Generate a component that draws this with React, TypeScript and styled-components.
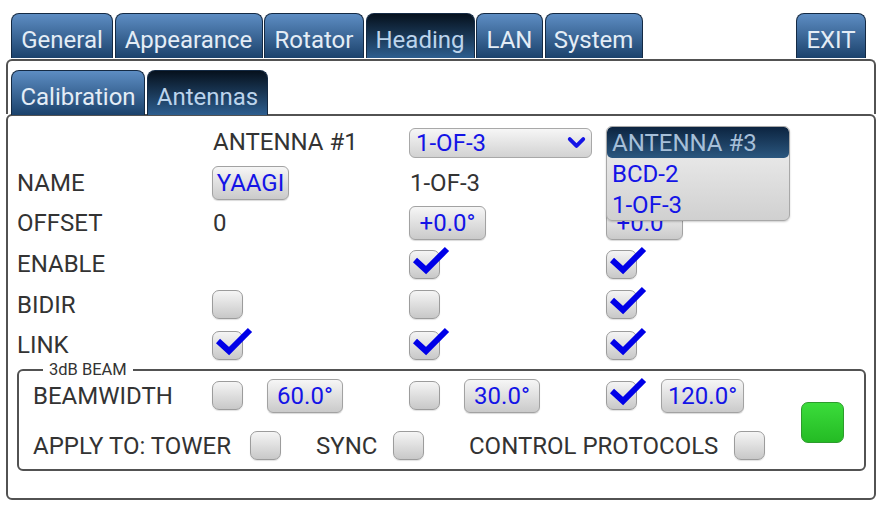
import React from 'react';
import styled, { createGlobalStyle, css } from 'styled-components';
import { ChevronDown } from 'lucide-react';

const Global = createGlobalStyle`
  html, body { margin: 0; padding: 0; background: #fff; }
  body {
    font-family: Roboto, "Noto Sans", "Liberation Sans", sans-serif;
    color: #333;
    width: 881px;
    height: 507px;
    overflow: hidden;
  }
  * { box-sizing: border-box; }
`;

const TabBar = styled.div`
  display: flex;
  gap: 1.5px;
  height: 58px;
  padding: 13px 15px 0 11px;
`;

const Tab = styled.div<{ $active?: boolean; $push?: boolean; $w: number }>`
  width: ${(p) => p.$w}px;
  height: 45px;
  display: flex;
  align-items: center;
  justify-content: center;
  padding-top: 8px;
  font-size: 24px;
  line-height: 1;
  color: #e4edf6;
  border: 1px solid #142a44;
  border-bottom: none;
  border-radius: 8px 8px 0 0;
  background: linear-gradient(#5d8dc3, #1b426c);
  white-space: nowrap;
  ${(p) =>
    p.$active &&
    css`
      background: linear-gradient(#06111d, #2d5e8f);
      color: #bcd4ec;
    `}
  ${(p) =>
    p.$push &&
    css`
      margin-left: auto;
    `}
`;

const Frame = styled.div`
  margin: 1px 0 0 6px;
  width: 870px;
  height: 55px;
  border: 2px solid #525252;
  border-bottom: none;
  border-radius: 6px 6px 0 0;
  padding: 9px 0 0 3px;
  display: flex;
  gap: 2px;
`;

const Panel = styled.div`
  margin-left: 6px;
  width: 870px;
  height: 386px;
  border: 2px solid #525252;
  border-radius: 6px;
  padding-top: 6px;
`;

const Grid = styled.div`
  display: grid;
  grid-template-columns: 195px 197px 197px 1fr;
  grid-auto-rows: 40.6px;
  align-items: center;
  padding-left: 9px;
`;

const Cell = styled.div`
  position: relative;
  display: flex;
  align-items: center;
  height: 100%;
`;

const Label = styled.span`
  font-size: 24px;
  color: #333;
  white-space: nowrap;
`;

const Value = styled(Label)<{ $x?: number }>`
  margin-left: ${(p) => p.$x ?? 1}px;
`;

const Btn = styled.span<{ $w: number }>`
  display: inline-flex;
  align-items: center;
  justify-content: center;
  width: ${(p) => p.$w}px;
  height: 34px;
  border: 1px solid #a2a2a2;
  border-radius: 6px;
  background: linear-gradient(#f6f6f6, #cacaca);
  box-shadow: 0 1px 1px rgba(0, 0, 0, 0.15);
  color: #1414e6;
  font-size: 24px;
  white-space: nowrap;
`;

const Box = styled.span`
  position: relative;
  display: inline-block;
  flex: none;
  width: 31px;
  height: 29px;
  border: 1px solid #9c9c9c;
  border-radius: 7px;
  background: linear-gradient(#f5f5f5, #c8c8c8);
  box-shadow: 0 1px 1px rgba(0, 0, 0, 0.12);
`;

const Tick = styled.svg`
  position: absolute;
  left: 0;
  top: 0;
  overflow: visible;
`;

const Check = ({ on }: { on?: boolean }) => (
  <Box>
    {on && (
      <Tick width="29" height="27" viewBox="0 0 29 27">
        <polyline points="5,9 16,19 37,-2" fill="none" stroke="#0000e8" strokeWidth="6" strokeLinejoin="miter" />
      </Tick>
    )}
  </Box>
);

const Select = styled.div`
  width: 183px;
  height: 30px;
  margin-top: 1px;
  border: 1px solid #a8a8a8;
  border-radius: 6px;
  background: linear-gradient(#f6f6f6, #d2d2d2);
  display: flex;
  align-items: center;
  justify-content: space-between;
  padding: 0 1px 0 6px;
  color: #1414e6;
  font-size: 24px;
`;

const Popup = styled.div`
  position: absolute;
  left: 0;
  top: 4px;
  width: 184px;
  z-index: 2;
  border: 1px solid #a8a8a8;
  border-radius: 6px;
  background: linear-gradient(#f2f2f2, #d0d0d0);
  overflow: hidden;
  box-shadow: 0 1px 2px rgba(0, 0, 0, 0.2);
`;

const PopupItem = styled.div<{ $head?: boolean }>`
  height: 31px;
  display: flex;
  align-items: center;
  padding-left: 5px;
  font-size: 24px;
  color: #1414e6;
  ${(p) =>
    p.$head &&
    css`
      background: linear-gradient(#0c2440, #2b577f);
      color: #a6bfd8;
      border-radius: 5px;
    `}
`;

const Fieldset = styled.div`
  position: relative;
  margin: 3px 8px 0 9px;
  height: 102px;
  border: 2px solid #525252;
  border-radius: 6px;
  display: flex;
  align-items: center;
`;

const Legend = styled.span`
  position: absolute;
  left: 24px;
  top: -10px;
  padding: 0 6px;
  background: #fff;
  font-size: 16.5px;
  line-height: 17px;
  color: #333;
`;

const BeamGrid = styled.div`
  display: grid;
  grid-template-columns: 179px 197px 197px auto;
  grid-template-rows: 34px 34px;
  row-gap: 16px;
  align-items: center;
  padding: 8px 0 6px 14px;
  align-self: flex-start;
`;

const Pair = styled.div`
  display: flex;
  align-items: center;
  gap: 24px;
`;

const ApplyRow = styled.div`
  grid-column: 1 / -1;
  display: flex;
  align-items: center;
`;

const InlineLabel = styled(Label)<{ $w: number; $ml?: number }>`
  display: inline-block;
  width: ${(p) => p.$w}px;
  margin-left: ${(p) => p.$ml ?? 0}px;
`;

const Led = styled.span`
  margin: 5px 20px 0 auto;
  width: 43px;
  height: 41px;
  border: 1px solid #2c9c2c;
  border-radius: 7px;
  background: linear-gradient(#3bdc3b, #24bb24);
`;

export default function App() {
  return (
    <>
      <Global />
      <TabBar>
        <Tab $w={102}>General</Tab>
        <Tab $w={148}>Appearance</Tab>
        <Tab $w={100}>Rotator</Tab>
        <Tab $w={109} $active>Heading</Tab>
        <Tab $w={67}>LAN</Tab>
        <Tab $w={98}>System</Tab>
        <Tab $w={70} $push>EXIT</Tab>
      </TabBar>
      <Frame>
        <Tab $w={134}>Calibration</Tab>
        <Tab $w={121} $active>Antennas</Tab>
      </Frame>
      <Panel>
        <Grid>
          <Cell />
          <Cell>
            <Value>ANTENNA #1</Value>
          </Cell>
          <Cell>
            <Select>
              <span>1-OF-3</span>
              <ChevronDown size={27} strokeWidth={3.4} color="#1414e6" />
            </Select>
          </Cell>
          <Cell>
            <Popup>
              <PopupItem $head>ANTENNA #3</PopupItem>
              <PopupItem>BCD-2</PopupItem>
              <PopupItem>1-OF-3</PopupItem>
            </Popup>
          </Cell>

          <Cell>
            <Label>NAME</Label>
          </Cell>
          <Cell>
            <Btn $w={77}>YAAGI</Btn>
          </Cell>
          <Cell>
            <Value>1-OF-3</Value>
          </Cell>
          <Cell />

          <Cell>
            <Label>OFFSET</Label>
          </Cell>
          <Cell>
            <Value>0</Value>
          </Cell>
          <Cell>
            <Btn $w={77}>+0.0°</Btn>
          </Cell>
          <Cell>
            <Btn $w={77}>+0.0°</Btn>
          </Cell>

          <Cell>
            <Label>ENABLE</Label>
          </Cell>
          <Cell />
          <Cell>
            <Check on />
          </Cell>
          <Cell>
            <Check on />
          </Cell>

          <Cell>
            <Label>BIDIR</Label>
          </Cell>
          <Cell>
            <Check />
          </Cell>
          <Cell>
            <Check />
          </Cell>
          <Cell>
            <Check on />
          </Cell>

          <Cell>
            <Label>LINK</Label>
          </Cell>
          <Cell>
            <Check on />
          </Cell>
          <Cell>
            <Check on />
          </Cell>
          <Cell>
            <Check on />
          </Cell>
        </Grid>
        <Fieldset>
          <Legend>3dB BEAM</Legend>
          <BeamGrid>
            <Label>BEAMWIDTH</Label>
            <Pair>
              <Check />
              <Btn $w={76}>60.0°</Btn>
            </Pair>
            <Pair>
              <Check />
              <Btn $w={76}>30.0°</Btn>
            </Pair>
            <Pair>
              <Check on />
              <Btn $w={83}>120.0°</Btn>
            </Pair>
            <ApplyRow>
              <InlineLabel $w={217}>APPLY TO: TOWER</InlineLabel>
              <Check />
              <InlineLabel $w={77} $ml={35}>SYNC</InlineLabel>
              <Check />
              <InlineLabel $w={265} $ml={45}>CONTROL PROTOCOLS</InlineLabel>
              <Check />
            </ApplyRow>
          </BeamGrid>
          <Led />
        </Fieldset>
      </Panel>
    </>
  );
}
